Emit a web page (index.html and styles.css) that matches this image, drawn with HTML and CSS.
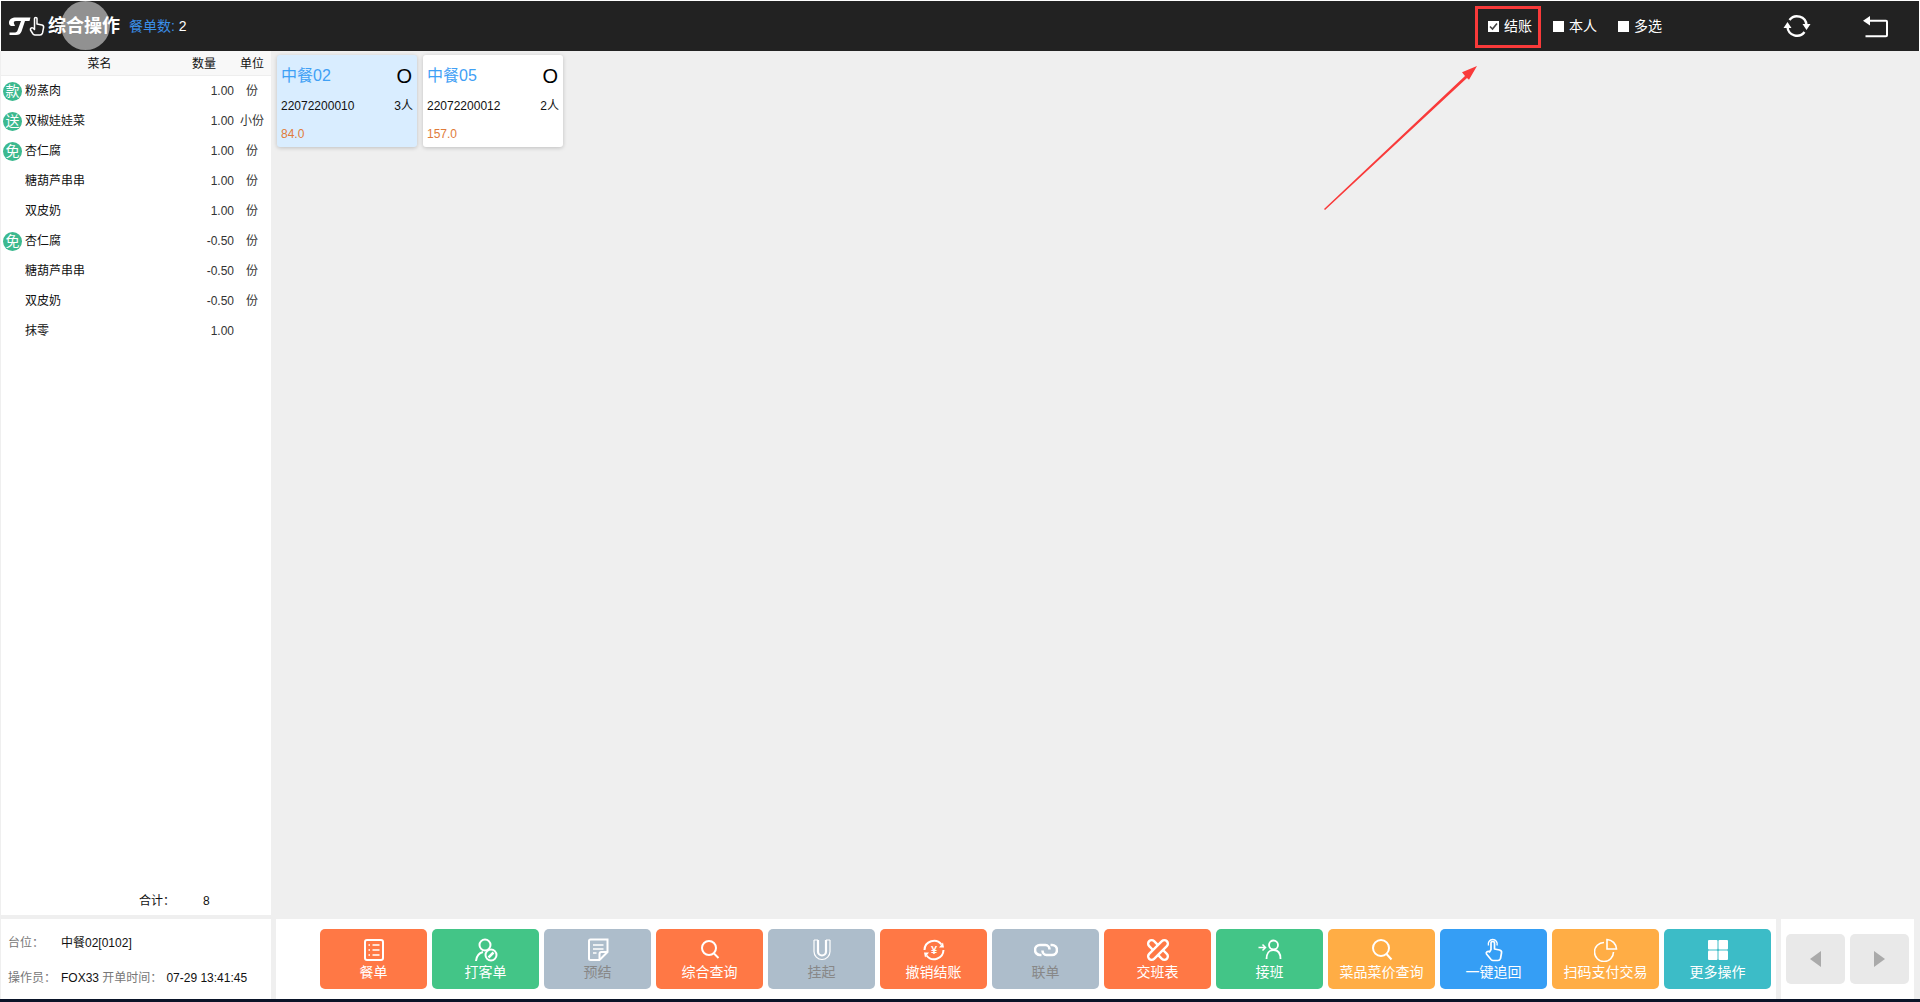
FILE: index.html
```html
<!DOCTYPE html>
<html lang="zh-CN">
<head>
  <meta charset="UTF-8">
  <title>综合操作</title>
  <link rel="stylesheet" href="styles.css">
</head>
<body>

<div class="app">
  <!-- top bar -->
  <div class="topbar">
    <svg class="logo" width="38" height="20" viewBox="0 0 38 20">
      <path fill="#fff" d="M1 7C1 3 4 1.500 8 1.500H22.500L21.500 5H17L13.500 15.500C12.500 18 11 19 8 19H1.500V16.500H6C8 16.500 9 16 9.500 14.500L13 5H8C6 5 5.500 6 6 7.500L7 10H3C2 9.500 1 8.500 1 7Z"/>
      <path fill="none" stroke="#fff" stroke-width="1.500" stroke-linejoin="round" d="M26.500 2.500C26.500 1 29 1 29 2.500V8L34 9C35.500 9.500 36 10.500 35.500 12L34.500 17C34 18.500 33 19 32 19H27C26 19 25.500 18.500 25 18L22.500 14C22 12.500 23.500 11 25 12L26.500 13.500Z"/>
    </svg>
    <div class="page-title">综合操作</div>
    <div class="order-count"><span class="order-count-label">餐单数:</span> 2</div>

    <div class="checks">
      <label class="check"><span class="check-box"><svg width="11" height="11" viewBox="0 0 11 11"><path fill="none" stroke="#444" stroke-width="1.600" d="M2 5.500L4.500 8L9 2.500"/></svg></span>结账</label>
      <label class="check"><span class="check-box"></span>本人</label>
      <label class="check"><span class="check-box"></span>多选</label>
    </div>

    <svg class="top-icon" width="28" height="28" viewBox="0 0 28 28" fill="none" stroke="#fff" stroke-width="2.400">
      <path d="M6.500 8A9.500 9.500 0 0 1 23.500 13"/>
      <path d="M21.500 20A9.500 9.500 0 0 1 4.500 15"/>
      <path fill="#fff" stroke="none" d="M19.500 12H27.500L23.500 18ZM0.500 16H8.500L4.500 10Z"/>
    </svg>
    <svg class="top-icon back-icon" width="28" height="28" viewBox="0 0 28 28" fill="none" stroke="#fff" stroke-width="2">
      <path d="M8 8.700H24C24.700 8.700 25 9 25 9.700V23.300C25 24 24.700 24.300 24 24.300H3.500"/>
      <path fill="#fff" stroke="none" d="M8 4V13.500L1 8.700Z"/>
    </svg>
  </div>

  <!-- middle -->
  <div class="content">
    <div class="dish-panel">
      <div class="dish-head">
        <span class="head-name">菜名</span>
        <span class="head-col">数量</span>
        <span class="head-col head-unit">单位</span>
      </div>

      <div class="dish-row"><span class="badge">款</span><span class="dish-name">粉蒸肉</span><span class="dish-qty">1.00</span><span class="dish-unit">份</span></div>
      <div class="dish-row"><span class="badge">送</span><span class="dish-name">双椒娃娃菜</span><span class="dish-qty">1.00</span><span class="dish-unit">小份</span></div>
      <div class="dish-row"><span class="badge">免</span><span class="dish-name">杏仁腐</span><span class="dish-qty">1.00</span><span class="dish-unit">份</span></div>
      <div class="dish-row"><span class="badge none"></span><span class="dish-name">糖葫芦串串</span><span class="dish-qty">1.00</span><span class="dish-unit">份</span></div>
      <div class="dish-row"><span class="badge none"></span><span class="dish-name">双皮奶</span><span class="dish-qty">1.00</span><span class="dish-unit">份</span></div>
      <div class="dish-row"><span class="badge">免</span><span class="dish-name">杏仁腐</span><span class="dish-qty">-0.50</span><span class="dish-unit">份</span></div>
      <div class="dish-row"><span class="badge none"></span><span class="dish-name">糖葫芦串串</span><span class="dish-qty">-0.50</span><span class="dish-unit">份</span></div>
      <div class="dish-row"><span class="badge none"></span><span class="dish-name">双皮奶</span><span class="dish-qty">-0.50</span><span class="dish-unit">份</span></div>
      <div class="dish-row"><span class="badge none"></span><span class="dish-name">抹零</span><span class="dish-qty">1.00</span><span class="dish-unit"></span></div>

      <div class="dish-total"><span class="total-label">合计：</span><span>8</span></div>
    </div>

    <div class="cards">
      <div class="card active">
        <div class="card-title"><span>中餐02</span><span class="card-state">O</span></div>
        <div class="card-row"><span>22072200010</span><span>3人</span></div>
        <div class="card-money">84.0</div>
      </div>
      <div class="card">
        <div class="card-title"><span>中餐05</span><span class="card-state">O</span></div>
        <div class="card-row"><span>22072200012</span><span>2人</span></div>
        <div class="card-money">157.0</div>
      </div>
    </div>
  </div>

  <!-- bottom -->
  <div class="bottom">
    <div class="info">
      <div class="info-row"><span class="info-label">台位：</span>中餐02[0102]</div>
      <div class="info-row"><span class="info-label">操作员：</span>FOX33 <span class="info-mid">开单时间：</span>07-29 13:41:45</div>
    </div>

    <div class="actions">
      <div class="btn orange">
        <svg width="24" height="24" viewBox="0 0 24 24" fill="none" stroke="#fff" stroke-width="2"><rect x="3" y="2" width="18" height="20" rx="2"/><path stroke-width="1.500" d="M6.500 7H8M10.500 7H17.500M6.500 12H8M10.500 12H17.500M6.500 17H8M10.500 17H17.500"/></svg>
        <span>餐单</span>
      </div>
      <div class="btn green">
        <svg width="24" height="24" viewBox="0 0 24 24" fill="none" stroke="#fff" stroke-width="2"><circle cx="11" cy="7" r="5.500"/><path d="M2 23C2.500 18 5 15 9 14"/><circle cx="17" cy="17" r="5.500"/><path stroke-width="2.500" d="M14.500 19.500L19.500 14.500"/></svg>
        <span>打客单</span>
      </div>
      <div class="btn grey">
        <svg width="24" height="24" viewBox="0 0 24 24" fill="none" stroke="#fff" stroke-width="2"><path d="M3 3C3 2 3.500 1.500 4.500 1.500H21.500V14L13.500 22H4.500C3.500 22 3 21.500 3 20.500Z"/><path d="M13.500 22V16C13.500 14.500 14.500 14 15.500 14H21.500"/><path stroke-width="1.500" d="M7 7H17.500M7 11H17.500M7 15H10.500"/></svg>
        <span>预结</span>
      </div>
      <div class="btn orange">
        <svg width="24" height="24" viewBox="0 0 24 24" fill="none" stroke="#fff" stroke-width="2"><circle cx="11" cy="10" r="7"/><path d="M16 15.500L20.500 20"/></svg>
        <span>综合查询</span>
      </div>
      <div class="btn grey">
        <svg width="24" height="24" viewBox="0 0 24 24" fill="none" stroke="#fff"><path stroke-width="1.200" d="M4 2V13.500A8 8 0 0 0 20 13.500V2"/><path stroke-width="2.200" d="M8 2V13.500A4 4 0 0 0 16 13.500V2"/><path stroke-width="1.200" d="M4 2H8M16 2H20"/></svg>
        <span>挂起</span>
      </div>
      <div class="btn orange">
        <svg width="24" height="24" viewBox="0 0 24 24" fill="none" stroke="#fff" stroke-width="2"><path d="M2.500 12A9.500 9.500 0 0 1 19.500 6.500"/><path d="M21.500 12A9.500 9.500 0 0 1 4.500 17.500"/><path fill="#fff" stroke="none" d="M22 9.500H17L21 4.500ZM2 14.500H7L3 19.500Z"/><text class="yen" x="12" y="16" text-anchor="middle">¥</text></svg>
        <span>撤销结账</span>
      </div>
      <div class="btn grey">
        <svg width="24" height="24" viewBox="0 0 24 24" fill="none" stroke="#fff" stroke-width="2.600"><path d="M7.500 17H6A5 5 0 0 1 6 7H11.500C14 7 15.500 9.500 15.500 11.500"/><path d="M16.500 7H18A5 5 0 0 1 18 17H12.500C10 17 8.500 14.500 8.500 12.500"/></svg>
        <span>联单</span>
      </div>
      <div class="btn orange">
        <svg width="24" height="24" viewBox="0 0 24 24" fill="none" stroke="#fff" stroke-width="2.400"><rect x="8.500" y="-0.500" width="7" height="25" rx="3.500" transform="rotate(45 12 12)"/><g transform="rotate(-45 12 12)"><path d="M8.500 8.500V3A3.500 3.500 0 0 1 15.500 3V8.500"/><path d="M8.500 15.500V21A3.500 3.500 0 0 0 15.500 21V15.500"/></g></svg>
        <span>交班表</span>
      </div>
      <div class="btn green">
        <svg width="24" height="24" viewBox="0 0 24 24" fill="none" stroke="#fff" stroke-width="1.800"><circle cx="15.500" cy="7" r="4.500"/><path d="M8.500 21C8.500 15.500 11 12 15.500 12S22.500 15.500 22.500 21"/><path stroke-width="1.500" d="M0.500 9.500H7M4.500 6.500L7.500 9.500L4.500 12.500"/></svg>
        <span>接班</span>
      </div>
      <div class="btn yellow">
        <svg width="24" height="24" viewBox="0 0 24 24" fill="none" stroke="#fff" stroke-width="2"><circle cx="11" cy="10" r="8"/><path d="M16.500 16L21.500 21.500"/></svg>
        <span>菜品菜价查询</span>
      </div>
      <div class="btn blue">
        <svg width="24" height="24" viewBox="0 0 24 24" fill="none" stroke="#fff" stroke-width="1.700" stroke-linejoin="round"><path d="M9 11.500V5C9 3 12.500 3 12.500 5V11L17.500 12C19 12.500 20 13.500 19.500 15L18.500 20.500C18 21.800 17 22.500 16 22.500H11C10 22.500 9.500 22 9 21.500L4.500 16C3.500 14 6 12.500 7.500 14Z"/><path stroke-width="1.400" d="M6.500 7.500A4.500 4.500 0 1 1 15 7.500"/></svg>
        <span>一键追回</span>
      </div>
      <div class="btn yellow">
        <svg width="24" height="24" viewBox="0 0 24 24" fill="none" stroke="#fff" stroke-width="1.600"><path d="M10 4.500A9.500 9.500 0 1 0 19.500 14"/><path d="M13 1.500A10 10 0 0 1 22.500 11H13Z"/></svg>
        <span>扫码支付交易</span>
      </div>
      <div class="btn teal">
        <svg width="24" height="24" viewBox="0 0 24 24" fill="#fff"><rect x="2" y="2" width="9.500" height="9.500" rx="1"/><rect x="12.500" y="2" width="9.500" height="9.500" rx="1"/><rect x="2" y="12.500" width="9.500" height="9.500" rx="1"/><rect x="12.500" y="12.500" width="9.500" height="9.500" rx="1"/></svg>
        <span>更多操作</span>
      </div>
    </div>

    <div class="pager">
      <div class="pager-btn"><span class="tri-left"></span></div>
      <div class="pager-btn"><span class="tri-right"></span></div>
    </div>
  </div>

  <div class="footer-strip"></div>

  <!-- things lying over the page -->
  <div class="touch-dot"></div>
  <div class="mark-box"></div>
  <svg class="mark-arrow" width="160" height="150" viewBox="0 0 160 150">
    <path fill="#f93a3a" d="M1 145L142 11.900L139 8.300L154 2L146 15.700L144 14.100L2 146Z"/>
  </svg>
</div>

</body>
</html>
```

FILE: styles.css
```css
* {
  box-sizing: border-box;
}

body {
  margin: 0;
  background-color: #fff;
  color: #111;
  font-family: "Liberation Sans", "Noto Sans CJK SC", sans-serif;
  font-size: 12px;
  line-height: 16px;
  overflow: hidden;
}

.app {
  position: relative;
  height: 1002px;
  padding-top: 1px;
  display: flex;
  flex-direction: column;
}

/* Top bar */
.topbar {
  height: 50px;
  margin: 0 1px;
  padding-right: 29px;
  background-color: #222;
  color: #fff;
  display: flex;
  align-items: center;
}

.logo {
  margin-left: 7px;
  flex: none;
}

.page-title {
  margin-left: 2px;
  font-size: 18px;
  font-weight: bold;
  line-height: 26px;
}

.order-count {
  margin-left: 9px;
  font-size: 14px;
}

.order-count-label {
  color: #3a8fe8;
}

.checks {
  margin-left: auto;
  display: flex;
  gap: 21px;
}

.check {
  display: flex;
  align-items: center;
  font-size: 14px;
  line-height: 20px;
}

.check-box {
  width: 11px;
  height: 11px;
  margin-right: 5px;
  background-color: #fff;
  display: block;
}

.check-box svg {
  display: block;
}

.top-icon {
  margin-left: 121px;
  flex: none;
}

.back-icon {
  margin-left: 51px;
}

/* Middle */
.content {
  height: 864px;
  background-color: #efefef;
  display: flex;
}

.dish-panel {
  width: 270px;
  margin-left: 1px;
  background-color: #fff;
  display: flex;
  flex-direction: column;
}

.dish-head {
  height: 25px;
  padding-top: 2px;
  background-color: #f8f8f8;
  border-bottom: 1px solid #eee;
  display: flex;
  align-items: center;
}

.head-name {
  width: 191px;
  padding-left: 6px;
  text-align: center;
}

.head-col {
  width: 24px;
}

.head-unit {
  margin-left: 24px;
}

.dish-row {
  height: 30px;
  padding-left: 2px;
  display: flex;
  align-items: center;
}

.badge {
  width: 19px;
  height: 19px;
  margin-right: 3px;
  border-radius: 50%;
  background-color: #3cb98f;
  color: #fff;
  font-size: 14px;
  line-height: 19px;
  text-align: center;
  flex: none;
}

.badge.none {
  background-color: transparent;
}

.dish-name {
  flex: 1;
}

.dish-qty {
  color: #333;
  text-align: right;
}

.dish-unit {
  width: 37px;
  padding-right: 1px;
  color: #333;
  text-align: center;
  flex: none;
}

.dish-total {
  margin-top: auto;
  height: 28px;
  padding-left: 138px;
  display: flex;
  align-items: center;
}

.total-label {
  width: 64px;
}

/* Table cards */
.cards {
  padding: 4px 0 0 6px;
  display: flex;
  align-items: flex-start;
  gap: 6px;
}

.card {
  width: 140px;
  height: 92px;
  padding: 0 4px;
  background-color: #fff;
  border-radius: 3px;
  box-shadow: 0 1px 4px rgba(0, 0, 0, 0.2);
}

.card.active {
  background-color: #d9edff;
}

.card-title {
  height: 41px;
  color: #3fa0f5;
  font-size: 16px;
  display: flex;
  justify-content: space-between;
  align-items: center;
}

.card-state {
  margin-right: 1px;
  color: #000;
  font-size: 20px;
}

.card-row {
  height: 20px;
  color: #111;
  display: flex;
  justify-content: space-between;
  align-items: center;
}

.card-money {
  margin-top: 8px;
  color: #e07b3a;
  line-height: 20px;
}

/* Bottom */
.bottom {
  height: 84px;
  padding: 4px 0 0 1px;
  background-color: #efefef;
  display: flex;
  gap: 5px;
}

.info {
  width: 270px;
  padding: 7px 0 0 7px;
  background-color: #fff;
}

.info-row {
  height: 35px;
  line-height: 35px;
  white-space: nowrap;
}

.info-label {
  width: 53px;
  color: #777;
  display: inline-block;
}

.info-mid {
  margin-right: 4px;
  color: #777;
}

.actions {
  width: 1500px;
  padding: 10px 5px 0 0;
  background-color: #fff;
  display: flex;
  justify-content: flex-end;
  gap: 5px;
}

.btn {
  width: 107px;
  height: 60px;
  padding-top: 9px;
  border-radius: 5px;
  color: #fff;
  font-size: 14px;
  line-height: 20px;
  text-align: center;
}

.btn svg {
  display: block;
  margin: 0 auto;
}

.orange {
  background-color: #ff7845;
}

.green {
  background-color: #43c587;
}

.grey {
  background-color: #adbdcb;
  color: #888;
}

.yellow {
  background-color: #ffad45;
}

.blue {
  background-color: #359ef5;
}

.teal {
  background-color: #3cbcc7;
}

.yen {
  fill: #fff;
  stroke: none;
  font-size: 11px;
  font-weight: bold;
}

.pager {
  width: 133px;
  padding: 15px 5px 0;
  background-color: #fff;
  display: flex;
  gap: 5px;
}

.pager-btn {
  width: 59px;
  height: 50px;
  border-radius: 5px;
  background-color: #e9e9e9;
  display: flex;
  align-items: center;
  justify-content: center;
}

.tri-left {
  border-style: solid;
  border-width: 8px 11px 8px 0;
  border-color: transparent #aaa transparent transparent;
}

.tri-right {
  border-style: solid;
  border-width: 8px 0 8px 11px;
  border-color: transparent transparent transparent #aaa;
}

.footer-strip {
  height: 3px;
  background-color: #0a1428;
}

/* Overlays */
.touch-dot {
  position: absolute;
  left: 61px;
  top: 1px;
  width: 49px;
  height: 49px;
  border-radius: 50%;
  background-color: rgba(255, 255, 255, 0.5);
}

.mark-box {
  position: absolute;
  left: 1475px;
  top: 6px;
  width: 66px;
  height: 42px;
  border: 3px solid #f93a3a;
}

.mark-arrow {
  position: absolute;
  left: 1323px;
  top: 64px;
}
```
